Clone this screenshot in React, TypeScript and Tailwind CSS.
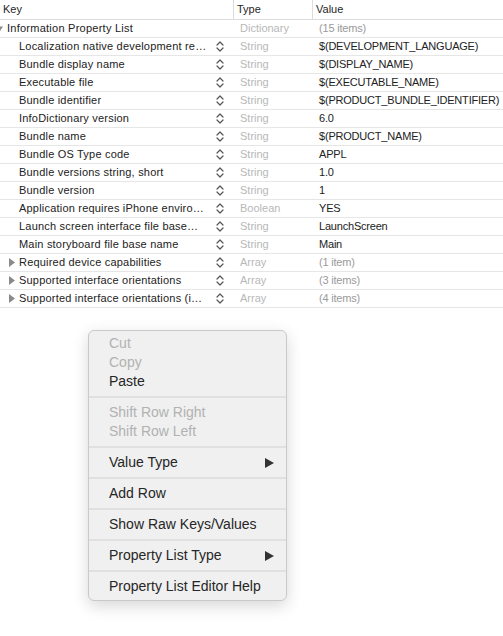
import React from "react";

type Row = {
  key: string;
  type: string;
  value: string;
  level: 0 | 1;
  disclosure?: "open" | "closed";
  stepper?: boolean;
  valueMuted?: boolean;
};

const rows: Row[] = [
  { key: "Information Property List", type: "Dictionary", value: "(15 items)", level: 0, disclosure: "open", valueMuted: true },
  { key: "Localization native development re…", type: "String", value: "$(DEVELOPMENT_LANGUAGE)", level: 1, stepper: true },
  { key: "Bundle display name", type: "String", value: "$(DISPLAY_NAME)", level: 1, stepper: true },
  { key: "Executable file", type: "String", value: "$(EXECUTABLE_NAME)", level: 1, stepper: true },
  { key: "Bundle identifier", type: "String", value: "$(PRODUCT_BUNDLE_IDENTIFIER)", level: 1, stepper: true },
  { key: "InfoDictionary version", type: "String", value: "6.0", level: 1, stepper: true },
  { key: "Bundle name", type: "String", value: "$(PRODUCT_NAME)", level: 1, stepper: true },
  { key: "Bundle OS Type code", type: "String", value: "APPL", level: 1, stepper: true },
  { key: "Bundle versions string, short", type: "String", value: "1.0", level: 1, stepper: true },
  { key: "Bundle version", type: "String", value: "1", level: 1, stepper: true },
  { key: "Application requires iPhone enviro…", type: "Boolean", value: "YES", level: 1, stepper: true },
  { key: "Launch screen interface file base…", type: "String", value: "LaunchScreen", level: 1, stepper: true },
  { key: "Main storyboard file base name", type: "String", value: "Main", level: 1, stepper: true },
  { key: "Required device capabilities", type: "Array", value: "(1 item)", level: 1, disclosure: "closed", stepper: true, valueMuted: true },
  { key: "Supported interface orientations", type: "Array", value: "(3 items)", level: 1, disclosure: "closed", stepper: true, valueMuted: true },
  { key: "Supported interface orientations (i…", type: "Array", value: "(4 items)", level: 1, disclosure: "closed", stepper: true, valueMuted: true },
];

const Stepper = () => (
  <svg width="8" height="13" viewBox="0 0 8 13" className="shrink-0">
    <path d="M1 5 L4 2 L7 5" fill="none" stroke="#555" strokeWidth="1.2" strokeLinecap="round" strokeLinejoin="round" />
    <path d="M1 8 L4 11 L7 8" fill="none" stroke="#555" strokeWidth="1.2" strokeLinecap="round" strokeLinejoin="round" />
  </svg>
);

const Triangle = ({ open }: { open: boolean }) =>
  open ? (
    <svg width="8" height="8" viewBox="0 0 8 8">
      <path d="M0 1 L8 1 L4 7 Z" fill="#8a8a8a" />
    </svg>
  ) : (
    <svg width="8" height="9" viewBox="0 0 8 9">
      <path d="M1 0 L7 4.5 L1 9 Z" fill="#8a8a8a" />
    </svg>
  );

type MenuItem = { label: string; disabled?: boolean; submenu?: boolean } | "sep";

const menu: MenuItem[] = [
  { label: "Cut", disabled: true },
  { label: "Copy", disabled: true },
  { label: "Paste" },
  "sep",
  { label: "Shift Row Right", disabled: true },
  { label: "Shift Row Left", disabled: true },
  "sep",
  { label: "Value Type", submenu: true },
  "sep",
  { label: "Add Row" },
  "sep",
  { label: "Show Raw Keys/Values" },
  "sep",
  { label: "Property List Type", submenu: true },
  "sep",
  { label: "Property List Editor Help" },
];

export default function App() {
  return (
    <div
      className="relative w-[503px] h-[636px] bg-white overflow-hidden"
      style={{ fontFamily: '"Liberation Sans", Arial, sans-serif' }}
    >
      {/* Header */}
      <div className="flex h-[20px] items-center border-b border-[#dcdcdc] text-[11px] text-[#262626]">
        <div className="w-[233px] shrink-0 pl-[3px]">Key</div>
        <div className="w-[79px] shrink-0 h-full flex items-center border-l border-[#dcdcdc] pl-[3px]">Type</div>
        <div className="flex-1 h-full flex items-center border-l border-[#dcdcdc] pl-[3px]">Value</div>
      </div>

      {/* Rows */}
      {rows.map((r) => (
        <div key={r.key} className="flex h-[18px] items-center border-b border-[#e6e6e6] text-[11px]">
          <div className="w-[233px] shrink-0 flex items-center h-full">
            {r.level === 0 ? (
              <div className="flex items-center">
                <div className="w-[7px] -ml-[4px] mr-[4px] flex items-center">
                  <Triangle open />
                </div>
                <span className="text-[#222] tracking-[0.25px]">{r.key}</span>
              </div>
            ) : (
              <div className="flex items-center">
                <div className="w-[19px] shrink-0 flex items-center justify-end pr-[3px]">
                  {r.disclosure === "closed" && <Triangle open={false} />}
                </div>
                <span className="w-[197px] shrink-0 whitespace-nowrap text-[#222] tracking-[0.2px]">{r.key}</span>
                {r.stepper && <Stepper />}
              </div>
            )}
          </div>
          <div className="w-[86px] shrink-0 pl-[7px] text-[#b8b8b8]">{r.type}</div>
          <div className={`flex-1 min-w-0 whitespace-nowrap tracking-[-0.2px] ${r.valueMuted ? "text-[#9a9a9a]" : "text-[#222]"}`}>{r.value}</div>
        </div>
      ))}

      {/* Context menu */}
      <div className="absolute left-[88px] top-[330px] w-[199px] rounded-[6px] border border-[#c9c9c9] bg-[#f0f0f0] pt-[3px] pb-[4px] shadow-[0_5px_16px_rgba(0,0,0,0.16)] text-[14px]">
        {menu.map((m, i) =>
          m === "sep" ? (
            <div key={i} className="h-[12px] flex items-center">
              <div className="h-[2px] w-full bg-[#e0e0e0]" />
            </div>
          ) : (
            <div key={i} className="h-[19px] flex items-center justify-between pl-[20px] pr-[12px]">
              <span className={m.disabled ? "text-[#b2b2b2]" : "text-[#262626]"}>{m.label}</span>
              {m.submenu && (
                <svg width="9" height="10" viewBox="0 0 9 10">
                  <path d="M0 0 L9 5 L0 10 Z" fill="#333" />
                </svg>
              )}
            </div>
          )
        )}
      </div>
    </div>
  );
}
